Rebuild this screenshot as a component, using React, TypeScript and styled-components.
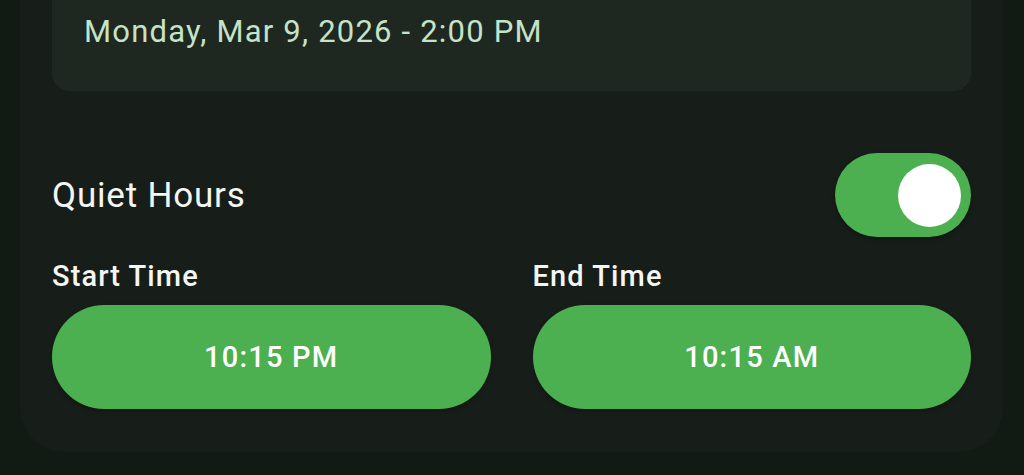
import React, { useState } from 'react';
import styled, { createGlobalStyle } from 'styled-components';

const GlobalStyle = createGlobalStyle`
  html, body {
    margin: 0;
    padding: 0;
    background: #121a14;
    overflow: hidden;
  }
  body {
    font-family: Roboto, 'Noto Sans', sans-serif;
  }
`;

const Page = styled.div`
  width: 1024px;
  height: 475px;
  background: #121a14;
  padding: 0 21px 0 20px;
  box-sizing: border-box;
`;

const Card = styled.div`
  background: #171e19;
  border-radius: 0 0 44px 44px;
  padding: 0 32px 42px;
  display: flex;
  flex-direction: column;
  box-shadow: 0 1px 0 rgba(255, 255, 255, 0.02);
`;

const DateBox = styled.div`
  height: 91px;
  background: #1f2721;
  border-radius: 0 0 18px 18px;
  padding: 15px 32px 0;
  box-sizing: border-box;
  color: #c5e3c6;
  font-size: 31px;
  letter-spacing: 1.2px;
  line-height: 34px;
`;

const ToggleRow = styled.div`
  display: flex;
  align-items: center;
  justify-content: space-between;
  margin-top: 62px;
`;

const RowLabel = styled.span`
  color: #f4f6f4;
  font-size: 35px;
  letter-spacing: 0.8px;
`;

const Track = styled.button<{ $on: boolean }>`
  width: 136px;
  height: 84px;
  border: none;
  border-radius: 42px;
  padding: 0 10px;
  background: ${p => (p.$on ? '#4caf50' : '#3a423c')};
  display: flex;
  align-items: center;
  justify-content: ${p => (p.$on ? 'flex-end' : 'flex-start')};
  cursor: pointer;
  box-shadow: 0 2px 4px rgba(0, 0, 0, 0.35);
`;

const Knob = styled.span`
  width: 63px;
  height: 63px;
  border-radius: 50%;
  background: #ffffff;
`;

const TimeGrid = styled.div`
  display: grid;
  grid-template-columns: 1fr 1fr;
  column-gap: 42px;
  margin-top: 21px;
`;

const TimeColumn = styled.div`
  display: flex;
  flex-direction: column;
  gap: 11px;
`;

const TimeLabel = styled.span`
  color: #f4f6f4;
  font-size: 29px;
  font-weight: 500;
  letter-spacing: 1.1px;
  line-height: 36px;
`;

const TimeButton = styled.button`
  height: 104px;
  border: none;
  border-radius: 52px;
  background: #4caf50;
  color: #ffffff;
  font-family: Roboto, 'Noto Sans', sans-serif;
  font-size: 29px;
  font-weight: 500;
  letter-spacing: 1.2px;
  cursor: pointer;
  box-shadow: 0 2px 4px rgba(0, 0, 0, 0.3);
`;

export default function App() {
  const [quiet, setQuiet] = useState(true);

  return (
    <Page>
      <GlobalStyle />
      <Card>
        <DateBox>Monday, Mar 9, 2026 - 2:00 PM</DateBox>
        <ToggleRow>
          <RowLabel>Quiet Hours</RowLabel>
          <Track $on={quiet} onClick={() => setQuiet(!quiet)}>
            <Knob />
          </Track>
        </ToggleRow>
        <TimeGrid>
          <TimeColumn>
            <TimeLabel>Start Time</TimeLabel>
            <TimeButton>10:15 PM</TimeButton>
          </TimeColumn>
          <TimeColumn>
            <TimeLabel>End Time</TimeLabel>
            <TimeButton>10:15 AM</TimeButton>
          </TimeColumn>
        </TimeGrid>
      </Card>
    </Page>
  );
}
